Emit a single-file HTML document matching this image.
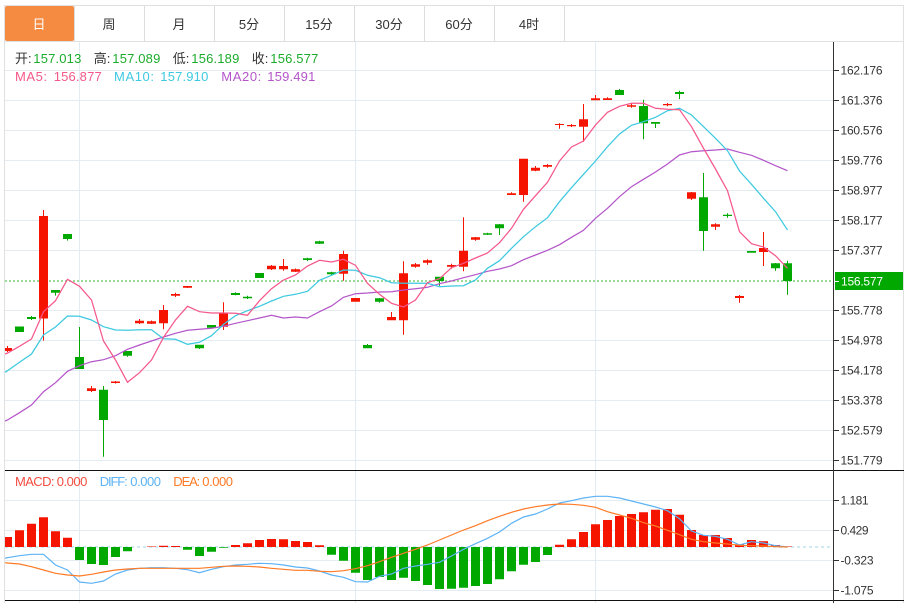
<!DOCTYPE html>
<html lang="zh"><head><meta charset="utf-8"><title>K线图</title>
<style>
html,body{margin:0;padding:0;background:#fff;width:911px;height:603px;overflow:hidden}
svg{display:block}
text{font-family:"Liberation Sans","Noto Sans CJK SC",sans-serif;font-size:13px}
.t{fill:#333;text-anchor:middle}
.a{fill:#333;font-size:12px}
.k{fill:#333}
.g{fill:#1cac2c}
</style></head><body>
<svg width="911" height="603" viewBox="0 0 911 603" xmlns="http://www.w3.org/2000/svg">
<defs><clipPath id="c"><rect x="5" y="42" width="828" height="561"/></clipPath></defs>
<rect x="5" y="6" width="69" height="35" rx="2" fill="#f58b40"/>
<path d="M74.5 6V41M144.5 6V41M214.5 6V41M284.5 6V41M354.5 6V41M424.5 6V41M494.5 6V41M564.5 6V41" stroke="#dcdcdc" fill="none"/>
<path d="M4 5.5H904M5 41.5H904M4.5 5V603M903.5 5V603" stroke="#e0e0e0" fill="none"/>
<path d="M5 70.5H833M5 100.5H833M5 130.5H833M5 160.5H833M5 190.5H833M5 220.5H833M5 250.5H833M5 310.5H833M5 340.5H833M5 370.5H833M5 400.5H833M5 430.5H833M5 460.5H833M5 500.5H833M5 530.5H833M5 560.5H833M5 590.5H833M79.5 42V603M355.5 42V603M595.5 42V603" stroke="#e3ecf3" fill="none"/>
<text class="t" x="39" y="29" style="fill:#fff">日</text>
<text class="t" x="109" y="29">周</text>
<text class="t" x="179" y="29">月</text>
<text class="t" x="249" y="29">5分</text>
<text class="t" x="319" y="29">15分</text>
<text class="t" x="389" y="29">30分</text>
<text class="t" x="459" y="29">60分</text>
<text class="t" x="529" y="29">4时</text>
<g clip-path="url(#c)">
<path d="M5 281H833" stroke="#00a800" stroke-opacity=".55" stroke-width="1.5" stroke-dasharray="2 2" fill="none"/>
<path fill="#f51400" d="M3 348h9v3h-9zM39 216h9v102.5h-9zM87 388.3h9v2.7h-9zM111 381.5h9v1.5h-9zM135 320.7h9v2.6h-9zM147 321.3h9v2.4h-9zM159 310h9v13.3h-9zM171 294h9v1.7h-9zM183 286h9v1.7h-9zM219 313.3h9v13.4h-9zM267 265.7h9v3.6h-9zM279 266h9v3.3h-9zM291 269.3h9v2.4h-9zM339 254h9v19.7h-9zM351 298h9v3.7h-9zM387 317h9v3.3h-9zM399 273.3h9v47h-9zM411 264.3h9v2.4h-9zM423 260.3h9v2.4h-9zM447 265h9v1.7h-9zM459 250.7h9v16h-9zM471 237.3h9v2.4h-9zM507 193.3h9v1.7h-9zM519 158.7h9v36.3h-9zM531 167.7h9v3h-9zM543 165h9v1.7h-9zM555 124h9v1h-9zM567 125h9v1.3h-9zM579 119.3h9v7.4h-9zM591 98.3h9v2h-9zM603 98.3h9v1.7h-9zM627 105.3h9v1.4h-9zM663 104h9v1.3h-9zM687 192.3h9v6.4h-9zM711 224.3h9v2.4h-9zM735 296h9v2h-9zM759 248h9v4h-9z"/>
<path stroke="#f51400" fill="none" d="M7.5 346V352M43.5 210V340.6M91.5 386V392M115.5 381V383.5M139.5 319V324M151.5 320.5V324M163.5 305V329.3M175.5 292.7V297M187.5 286V288M223.5 302.3V330M271.5 265V270M283.5 259V270.7M295.5 268.5V272M343.5 250.7V280.7M391.5 312V320M403.5 261.3V334.7M415.5 263V267.7M427.5 259.3V264.7M451.5 263.7V268.7M463.5 217.3V271.3M475.5 237V240.7M511.5 192.3V195M523.5 158.7V201.7M535.5 166V171.3M547.5 164V167.7M559.5 123.3V128.7M571.5 124V127M583.5 104V141.7M595.5 95V100M607.5 97.3V100M631.5 103.3V107.7M667.5 103V106.3M691.5 192V200M715.5 223.3V230M739.5 295V302.7M763.5 232V266"/>
<path fill="#00a800" d="M15 326.5h9v5.5h-9zM27 317h9v2h-9zM51 290h9v2.7h-9zM63 234h9v5h-9zM75 357h9v12h-9zM99 389.7h9v30.3h-9zM123 351h9v4.7h-9zM195 344.7h9v3.6h-9zM207 325h9v2.7h-9zM231 293h9v2h-9zM243 296.7h9v1.6h-9zM255 273h9v5h-9zM303 258.3h9v1.7h-9zM315 241.3h9v2.4h-9zM327 272.3h9v2h-9zM363 345h9v3.3h-9zM375 298.3h9v3.4h-9zM435 276.7h9v4.3h-9zM483 233.3h9v1.4h-9zM495 224.3h9v4h-9zM615 90h9v5h-9zM639 106h9v17.3h-9zM651 122h9v1.7h-9zM675 92h9v2h-9zM699 197.3h9v33.7h-9zM723 214.7h9v1.3h-9zM747 251h9v1.7h-9zM771 263.3h9v5h-9zM783 263.3h9v17.7h-9z"/>
<path stroke="#00a800" fill="none" d="M31.5 316V320M55.5 290V295.6M67.5 234V240.6M79.5 327V369M103.5 386V456.7M127.5 351V356.7M199.5 345V349M235.5 292.3V295.3M247.5 295.7V299M307.5 257.7V261M319.5 240.7V244M331.5 271.7V275M367.5 344V348M379.5 298V302.7M439.5 277V285.7M487.5 232.7V235M499.5 224V235M619.5 89V95M643.5 99.7V139.3M655.5 122V128M679.5 90.7V99M703.5 173V250.7M727.5 213.3V217.7M775.5 263V270.7M787.5 260.7V294.7"/>
<polyline fill="none" stroke="#b455c9" stroke-width="1.25" points="5,421 7.5,420 19.5,412.7 31.5,405 43.5,391.7 55.5,382.7 67.5,371.3 79.5,365.7 91.5,361.7 103.5,359.7 115.5,355.7 127.5,349.3 139.5,345 151.5,341 163.5,337 175.5,333.3 187.5,330.3 199.5,329.3 211.5,328.3 223.5,326.3 235.5,323.3 247.5,320.7 259.5,318 271.5,315.3 283.5,318 295.5,317 307.5,318 319.5,311.7 331.5,306 343.5,297.3 355.5,293.7 367.5,293 379.5,292 391.5,291.7 403.5,290 415.5,288.7 427.5,287.3 439.5,283.7 451.5,281 463.5,277.7 475.5,274.7 487.5,271.3 499.5,269 511.5,265.7 523.5,259.7 535.5,255 547.5,250.3 559.5,244.7 571.5,237.3 583.5,230.3 595.5,218.3 607.5,208.3 619.5,196.7 631.5,186.7 643.5,179.3 655.5,172 667.5,164 679.5,155 691.5,151.7 703.5,150.7 715.5,150 727.5,149 739.5,152.3 751.5,155.3 763.5,160.3 775.5,165.7 787.5,170.7"/>
<polyline fill="none" stroke="#3ec9e0" stroke-width="1.25" points="5,372.3 7.5,370.7 19.5,362.3 31.5,354 43.5,335 55.5,327 67.5,316 79.5,316.3 91.5,320 103.5,326.7 115.5,330 127.5,330.3 139.5,329.7 151.5,329.7 163.5,338.7 175.5,339.3 187.5,344.3 199.5,342.3 211.5,335.7 223.5,324.3 235.5,315.7 247.5,310.7 259.5,306.3 271.5,301 283.5,296.3 295.5,294.3 307.5,291.3 319.5,280.3 331.5,275.3 343.5,270 355.5,270.3 367.5,275.3 379.5,277.7 391.5,282.7 403.5,283.3 415.5,283.3 427.5,283.3 439.5,286.7 451.5,286 463.5,285.7 475.5,280 487.5,268.3 499.5,260.7 511.5,248.3 523.5,236.7 535.5,226.7 547.5,217.7 559.5,201.7 571.5,187.7 583.5,174.3 595.5,161 607.5,146.7 619.5,134 631.5,125.3 643.5,121.7 655.5,117.3 667.5,110.7 679.5,108.3 691.5,115 703.5,126.7 715.5,138.3 727.5,150.7 739.5,171 751.5,184.3 763.5,198.3 775.5,211.7 787.5,230"/>
<polyline fill="none" stroke="#f5588a" stroke-width="1.25" points="5,354 7.5,353 19.5,346.3 31.5,339 43.5,311.7 55.5,300.7 67.5,279.3 79.5,286.3 91.5,300 103.5,341 115.5,360 127.5,382.3 139.5,372.7 151.5,360 163.5,337.3 175.5,320 187.5,306.3 199.5,311.7 211.5,313 223.5,313 235.5,313.3 247.5,315.3 259.5,300.7 271.5,288.7 283.5,280 295.5,275 307.5,266 319.5,260.3 331.5,262 343.5,259.3 355.5,265.3 367.5,283.3 379.5,294.3 391.5,303.3 403.5,307 415.5,300 427.5,282.7 439.5,278.7 451.5,267.7 463.5,263.3 475.5,258 487.5,253 499.5,242.7 511.5,228.3 523.5,209.3 535.5,195.7 547.5,182.3 559.5,161 571.5,147 583.5,141 595.5,125 607.5,112.3 619.5,106.3 631.5,103.3 643.5,103.3 655.5,108.3 667.5,109.3 679.5,109.7 691.5,126.7 703.5,148.3 715.5,169 727.5,190.7 739.5,231.7 751.5,243.7 763.5,247 775.5,255.7 787.5,268.3"/>
<path d="M5 547H833" stroke="#bfe3ef" stroke-width="1.5" stroke-dasharray="3 3" fill="none"/>
<path fill="#f51400" d="M3 537h9v10h-9zM15 530.3h9v16.7h-9zM27 523.7h9v23.3h-9zM39 517.3h9v29.7h-9zM51 531.3h9v15.7h-9zM63 537.7h9v9.3h-9zM147 546.5h9v.5h-9zM159 545.7h9v1.3h-9zM171 546h9v1h-9zM231 545h9v2h-9zM243 543.3h9v3.7h-9zM255 540h9v7h-9zM267 539h9v8h-9zM279 539.3h9v7.7h-9zM291 541h9v6h-9zM303 542h9v5h-9zM315 545.3h9v1.7h-9zM555 544.7h9v2.3h-9zM567 539.3h9v7.7h-9zM579 532h9v15h-9zM591 524.3h9v22.7h-9zM603 520h9v27h-9zM615 516h9v31h-9zM627 514h9v33h-9zM639 512.3h9v34.7h-9zM651 509.7h9v37.3h-9zM663 509h9v38h-9zM675 514.7h9v32.3h-9zM687 530h9v17h-9zM699 535h9v12h-9zM711 535h9v12h-9zM723 538h9v9h-9zM735 544.3h9v2.7h-9zM747 540h9v7h-9zM759 541.3h9v5.7h-9zM771 545h9v2h-9zM783 546.5h9v.5h-9z"/>
<path fill="#00a800" d="M75 547h9v13h-9zM87 547h9v17h-9zM99 547h9v18h-9zM111 547h9v10h-9zM123 547h9v4.3h-9zM183 547h9v2.7h-9zM195 547h9v9h-9zM207 547h9v4.7h-9zM219 547h9v.7h-9zM327 547h9v7.7h-9zM339 547h9v13.7h-9zM351 547h9v25.7h-9zM363 547h9v33h-9zM375 547h9v30h-9zM387 547h9v33h-9zM399 547h9v30.7h-9zM411 547h9v34h-9zM423 547h9v38h-9zM435 547h9v42h-9zM447 547h9v41.7h-9zM459 547h9v40.7h-9zM471 547h9v39h-9zM483 547h9v37h-9zM495 547h9v32.3h-9zM507 547h9v24.3h-9zM519 547h9v17.7h-9zM531 547h9v15h-9zM543 547h9v8h-9z"/>
<polyline fill="none" stroke="#5db3f5" stroke-width="1.2" points="5,558.3 7.5,557.7 19.5,555.7 31.5,554.3 43.5,554.3 55.5,565 67.5,570 79.5,582 91.5,583.3 103.5,581 115.5,574 127.5,570 139.5,568.3 151.5,567.7 163.5,567.7 175.5,568.3 187.5,569.7 199.5,572.7 211.5,569.3 223.5,566.7 235.5,565 247.5,564.3 259.5,563.3 271.5,563.7 283.5,565 295.5,567 307.5,568 319.5,571 331.5,575 343.5,577.3 355.5,581.7 367.5,582 379.5,576.3 391.5,574 403.5,568.3 415.5,566 427.5,564.3 439.5,562.3 451.5,556 463.5,549.3 475.5,543.7 487.5,538.3 499.5,532 511.5,523.3 523.5,517 535.5,514 547.5,509 559.5,503 571.5,500.7 583.5,498 595.5,496.3 607.5,496.3 619.5,498 631.5,501 643.5,504 655.5,507 667.5,510.7 679.5,518.7 691.5,531 703.5,535.3 715.5,536.3 727.5,539.3 739.5,545 751.5,541.7 763.5,543 775.5,545.7 787.5,547"/>
<polyline fill="none" stroke="#ff7a26" stroke-width="1.2" points="5,562.7 7.5,563 19.5,564 31.5,566.7 43.5,570 55.5,573.3 67.5,575 79.5,576 91.5,574.3 103.5,572 115.5,570 127.5,569 139.5,568.3 151.5,568.3 163.5,568.3 175.5,568.3 187.5,568.3 199.5,568.3 211.5,567.3 223.5,566.3 235.5,566 247.5,566.3 259.5,567 271.5,568.3 283.5,569.3 295.5,570.3 307.5,570.3 319.5,571.3 331.5,571.7 343.5,570.7 355.5,568.7 367.5,565.7 379.5,561.7 391.5,557.3 403.5,553.3 415.5,549.3 427.5,545 439.5,540 451.5,535 463.5,530 475.5,525.7 487.5,520.7 499.5,516.3 511.5,512.3 523.5,509 535.5,506.7 547.5,505 559.5,504 571.5,504.3 583.5,505.3 595.5,507.3 607.5,511.7 619.5,515 631.5,518.3 643.5,522.7 655.5,526 667.5,530.3 679.5,534.7 691.5,539.3 703.5,541.7 715.5,543 727.5,544 739.5,545.3 751.5,545.7 763.5,546 775.5,546.7 787.5,547"/>
</g>
<path d="M5 470.5H904M5 600.5H904" stroke="#111" fill="none"/>
<path d="M833.5 42V603" stroke="#333" fill="none"/>
<path d="M834 70.5h5M834 100.5h5M834 130.5h5M834 160.5h5M834 190.5h5M834 220.5h5M834 250.5h5M834 310.5h5M834 340.5h5M834 370.5h5M834 400.5h5M834 430.5h5M834 460.5h5M834 500.5h5M834 530.5h5M834 560.5h5M834 590.5h5" stroke="#333" fill="none"/>
<rect x="835" y="272" width="68" height="18" fill="#00a800"/>
<path d="M835 281.5h4" stroke="#fff" fill="none"/>
<text class="a" x="840.5" y="74.5" textLength="42">162.176</text>
<text class="a" x="840.5" y="104.5" textLength="42">161.376</text>
<text class="a" x="840.5" y="134.5" textLength="42">160.576</text>
<text class="a" x="840.5" y="164.5" textLength="42">159.776</text>
<text class="a" x="840.5" y="194.5" textLength="42">158.977</text>
<text class="a" x="840.5" y="224.5" textLength="42">158.177</text>
<text class="a" x="840.5" y="254.5" textLength="42">157.377</text>
<text class="a" x="841" y="285.5" style="fill:#fff" textLength="42">156.577</text>
<text class="a" x="840.5" y="314.5" textLength="42">155.778</text>
<text class="a" x="840.5" y="344.5" textLength="42">154.978</text>
<text class="a" x="840.5" y="374.5" textLength="42">154.178</text>
<text class="a" x="840.5" y="404.5" textLength="42">153.378</text>
<text class="a" x="840.5" y="434.5" textLength="42">152.579</text>
<text class="a" x="840.5" y="464.5" textLength="42">151.779</text>
<text class="a" x="840.5" y="504.5" textLength="28">1.181</text>
<text class="a" x="840.5" y="534.5" textLength="28">0.429</text>
<text class="a" x="840.5" y="564.5" textLength="33">-0.323</text>
<text class="a" x="840.5" y="594.5" textLength="33">-1.075</text>
<text class="k" x="15" y="63">开:</text><text class="g" x="33.3" y="63" textLength="48">157.013</text>
<text class="k" x="93.7" y="63">高:</text><text class="g" x="112.3" y="63" textLength="48">157.089</text>
<text class="k" x="172.7" y="63">低:</text><text class="g" x="191.3" y="63" textLength="48">156.189</text>
<text class="k" x="251.7" y="63">收:</text><text class="g" x="270.3" y="63" textLength="48">156.577</text>
<text x="15" y="81" fill="#f5588a" textLength="32">MA5:</text><text x="53.7" y="81" fill="#f5588a" textLength="48">156.877</text>
<text x="114" y="81" fill="#3ec9e0" textLength="40">MA10:</text><text x="160.3" y="81" fill="#3ec9e0" textLength="48">157.910</text>
<text x="221.3" y="81" fill="#b455c9" textLength="40">MA20:</text><text x="267.3" y="81" fill="#b455c9" textLength="48">159.491</text>
<text x="15" y="486" fill="#f24d40" textLength="39.5">MACD:</text><text x="56.7" y="486" fill="#f24d40" textLength="30.7">0.000</text>
<text x="99.7" y="486" fill="#5db3f5" textLength="28">DIFF:</text><text x="130.3" y="486" fill="#5db3f5" textLength="30.7">0.000</text>
<text x="173.3" y="486" fill="#ff7a26" textLength="27">DEA:</text><text x="202.3" y="486" fill="#ff7a26" textLength="30.7">0.000</text>
</svg>
</body></html>
